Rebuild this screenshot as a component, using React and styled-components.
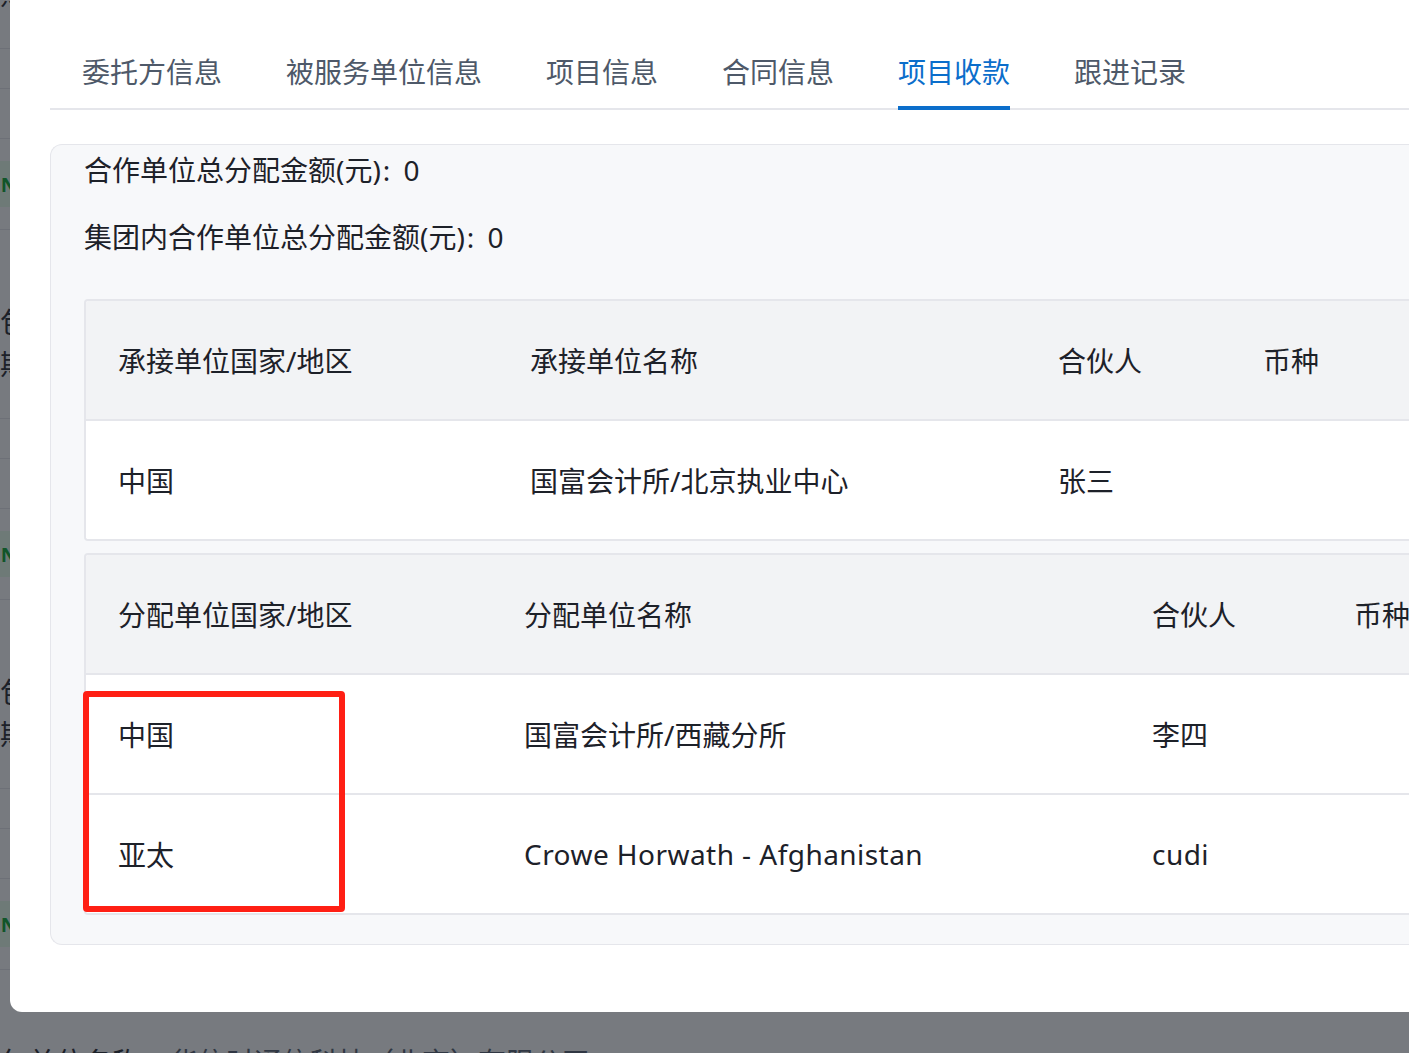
import React from "react";
import styled, { createGlobalStyle } from "styled-components";

const GlobalStyle = createGlobalStyle`
  * { box-sizing: border-box; }
  html, body {
    margin: 0;
    padding: 0;
    height: 100%;
    overflow: hidden;
    background: #fff;
  }
  body {
    font-family: "Noto Sans", "Noto Sans CJK SC", sans-serif;
    color: #1d2129;
  }
`;

const tabs = ["委托方信息", "被服务单位信息", "项目信息", "合同信息", "项目收款", "跟进记录"];

const contractorCols = "412px 528px 205px 1fr";
const allotCols = "406px 628px 202px 1fr";

const contractorRows = [["中国", "国富会计所/北京执业中心", "张三", ""]];
const allotRows = [
  ["中国", "国富会计所/西藏分所", "李四", ""],
  ["亚太", "Crowe Horwath - Afghanistan", "cudi", ""],
];

const isLatin = s => /^[\x20-\x7e]+$/.test(s);

const App = () => (
  <>
    <GlobalStyle />
    <Page>
      {[0, 1, 2, 3].map(i => (
        <Block key={i}>
          <TagRow>
            <Tag>IN-</Tag>
          </TagRow>
          <InfoRow>
            <InfoLine>
              <InfoLabel>发包单位名称</InfoLabel>
              <InfoValue>华信时通信科技（北京）有限公司</InfoValue>
            </InfoLine>
            <InfoLine>
              <InfoLabel>排期单位名称</InfoLabel>
              <InfoValue>国富会计所/北京执业中心</InfoValue>
            </InfoLine>
          </InfoRow>
          <ListRow height={40} />
          <ListRow height={50} />
        </Block>
      ))}
    </Page>

    <Mask />

    <Modal>
      <TabBar>
        {tabs.map(t => (
          <Tab key={t} active={t === "项目收款"}>
            {t}
          </Tab>
        ))}
      </TabBar>

      <Card>
        <Summary>
          合作单位总分配金额(元)<Amount>: 0</Amount>
        </Summary>
        <Summary>
          集团内合作单位总分配金额(元)<Amount>: 0</Amount>
        </Summary>

        <TableWrap>
          <TableBox>
            <HeadRow cols={contractorCols}>
              <Cell>承接单位国家/地区</Cell>
              <Cell>承接单位名称</Cell>
              <Cell>合伙人</Cell>
              <Cell>币种</Cell>
            </HeadRow>
            {contractorRows.map((r, i) => (
              <BodyRow key={i} cols={contractorCols}>
                {r.map((c, j) => (
                  <Cell key={j} latin={isLatin(c)}>
                    {c}
                  </Cell>
                ))}
              </BodyRow>
            ))}
          </TableBox>
        </TableWrap>

        <TableWrap>
          <TableBox>
            <HeadRow cols={allotCols}>
              <Cell>分配单位国家/地区</Cell>
              <Cell>分配单位名称</Cell>
              <Cell>合伙人</Cell>
              <Cell>币种</Cell>
            </HeadRow>
            {allotRows.map((r, i) => (
              <BodyRow key={i} cols={allotCols}>
                {r.map((c, j) => (
                  <Cell key={j} latin={isLatin(c)}>
                    {c}
                  </Cell>
                ))}
              </BodyRow>
            ))}
          </TableBox>
          <Highlight />
        </TableWrap>
      </Card>
    </Modal>
  </>
);

/* page behind the dialog */

const Page = styled.div`
  margin: -231px 0 0 -60px;
  width: 1600px;
`;

const Block = styled.div`
  display: flex;
  flex-direction: column;
`;

const TagRow = styled.div`
  height: 91px;
  display: flex;
  align-items: center;
  padding-left: 44px;
  border-bottom: 1px solid #e5e6eb;
`;

const Tag = styled.span`
  display: inline-flex;
  align-items: center;
  height: 46px;
  padding: 0 8px;
  background: #e8ffea;
  color: #00a32a;
  font-size: 20px;
  font-weight: 700;
  letter-spacing: 1px;
`;

const InfoRow = styled.div`
  height: 189px;
  padding: 71px 0 0 32px;
  border-bottom: 1px solid #e5e6eb;
`;

const InfoLine = styled.div`
  display: flex;
  gap: 30px;
  font-size: 28px;
  line-height: 42px;
  white-space: nowrap;
`;

const InfoLabel = styled.span`
  color: #1d2129;
`;

const InfoValue = styled.span`
  color: #4e5969;
`;

const ListRow = styled.div`
  height: ${p => p.height}px;
  border-bottom: 1px solid #e5e6eb;
`;

const Mask = styled.div`
  position: fixed;
  inset: 0;
  background: rgba(29, 33, 41, 0.6);
`;

/* dialog */

const Modal = styled.div`
  position: fixed;
  top: 0;
  left: 10px;
  width: 1700px;
  background: #fff;
  border-radius: 0 0 0 12px;
  padding: 32px 0 67px 40px;
`;

const TabBar = styled.div`
  display: flex;
  gap: 64px;
  padding-left: 32px;
  border-bottom: 2px solid #e5e6eb;
`;

const Tab = styled.div`
  padding: 20px 0 14px;
  margin-bottom: -2px;
  font-size: 28px;
  line-height: 40px;
  white-space: nowrap;
  color: ${p => (p.active ? "#0b6ecb" : "#4e5969")};
  border-bottom: 4px solid ${p => (p.active ? "#0b6ecb" : "transparent")};
`;

const Card = styled.div`
  margin-top: 34px;
  padding: 5px 0 29px 33px;
  background: #f7f8fa;
  border: 1px solid #e5e6eb;
  border-right: none;
  border-radius: 12px 0 0 12px;
`;

const Summary = styled.div`
  font-size: 28px;
  line-height: 40px;
  color: #1d2129;
  white-space: nowrap;

  & + & {
    margin-top: 27px;
  }
`;

const Amount = styled.span`
  letter-spacing: 3px;
  margin-left: 2px;
`;

const TableWrap = styled.div`
  position: relative;
  margin-top: 12px;

  ${Summary} + & {
    margin-top: 42px;
  }
`;

const TableBox = styled.div`
  border: 2px solid #e5e6eb;
  border-right: none;
  border-radius: 4px 0 0 4px;
  overflow: hidden;
  background: #fff;
`;

const Row = styled.div`
  display: grid;
  grid-template-columns: ${p => p.cols};
  height: 120px;
  border-bottom: 2px solid #e5e6eb;

  &:last-child {
    height: 118px;
    border-bottom: none;
  }
`;

const HeadRow = styled(Row)`
  background: #f2f3f5;
`;

const BodyRow = styled(Row)`
  background: #fff;
`;

const Cell = styled.div`
  display: flex;
  align-items: center;
  padding-left: 32px;
  font-size: 28px;
  color: #1d2129;
  white-space: nowrap;
  letter-spacing: ${p => (p.latin ? "0.45px" : "0")};
`;

const Highlight = styled.div`
  position: absolute;
  left: -1px;
  top: 138px;
  width: 262px;
  height: 221px;
  border: 6px solid #ff1f14;
  border-radius: 4px;
  pointer-events: none;
`;

export default App;
